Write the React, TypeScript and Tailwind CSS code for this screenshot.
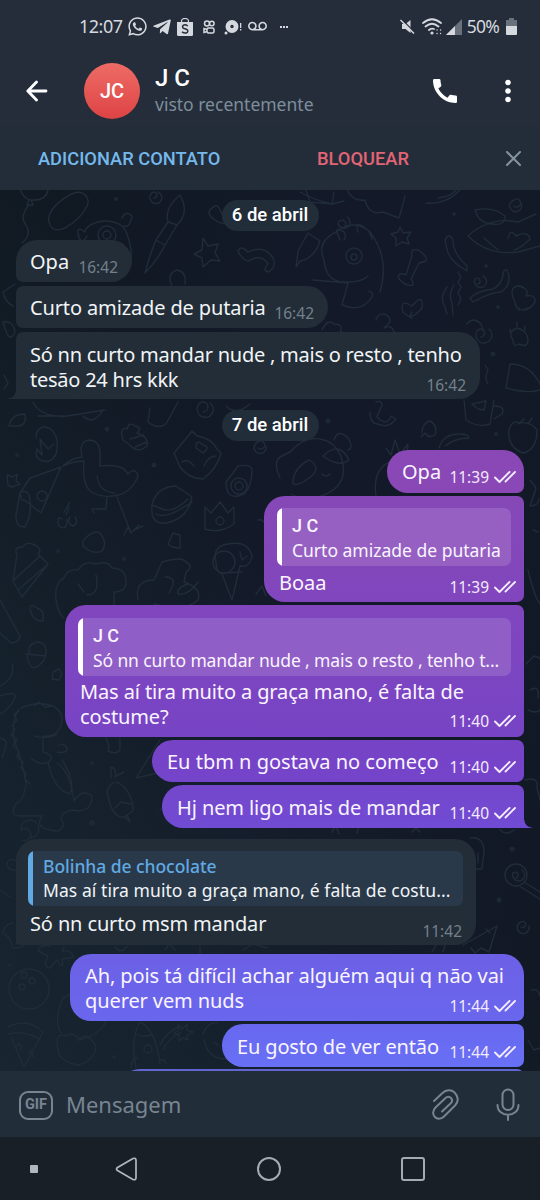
import type { ReactNode } from "react";
import { FaTelegramPlane, FaWhatsapp } from "react-icons/fa";
import { MdCall, MdMoreVert, MdVoicemail } from "react-icons/md";

function Wallpaper() {
  return (
    <svg
      className="absolute inset-0 h-full w-full"
      viewBox="0 190 540 881"
      fill="none"
      stroke="#202c3a"
      strokeWidth="1.4"
      strokeLinecap="round"
      strokeLinejoin="round"
    >
      {/* balloon, sausage and puppy */}
      <path d="M20 190q6 12 14 10q12 0 14-10M29 200l-2 5h6l-2-5M29 205q-10 12-3 20q6 10-4 18M50 225c-6-12 10-26 24-32c10-3 18 6 12 15c-8 14-30 30-36 17z" />
      <path d="M85 232c2-12 36-18 42 2c4 12 6 22 2 32M85 232q-10-8-6 6q4 6 8-2M122 218q4-8 10-2q-2 12-8 10" />
      <circle cx="107" cy="235" r="9" />
      <circle cx="107" cy="235" r="4" />
      {/* brush */}
      <path d="M168 222q-4-14 12-27q10 18-3 30zM168 222l9 3l-12 20l-9-5zM156 240l9 5q-8 16-20 28q4-16 11-33z" />
      <path d="M154 198a3 3 0 1 0-3-4a6 6 0 1 0 7-2M203 238l5 8l10-2l-3 9l5 8l-9-1l-8 7l-1-9l-8-4l8-4zM215 206q-12 6 0 14q10 8 16-4q-2-8-9-2q-4-10-7-8M238 252q2-8 10 0q18-8 26 8q2 8-6 12q-6-2 0-8q-6-10-18-4q-4 4-12-8z" />
      <path d="M172 286q-6-12 5-16q10 2 8 14M308 233l12 8q-6 18-20 20l-4 6l2-16zM341 228a4 4 0 1 0-3-5a6 6 0 1 0 9-6" />
      {/* calf */}
      <path d="M324 260q-8-18 12-28q18-14 34 0q20 26 10 60M340 240q-6-14 0-10q8 2 4 10M358 232q-4-12 6-5q6 4 8 12M324 260q2 24 24 22q14 0 20-6M313 280l35 3l-6 22M342 305q20 8 30-8q2-4-3-6" />
      <circle cx="354" cy="256" r="8" />
      <circle cx="354" cy="257" r="3" />
      <path d="M400 227l3 6l8-1l-4 6l2 6l-7-2l-6 4l0-8l-5-4l7-2zM412 256q-2-8 6-6q10 6 8 11q-6 2-7 2l-8 16q6 8-4 6q-8-4-9-9q2-4 8-1zM403 312q-4-14 9-6q12-14 10 2q-8 10-14 8zM412 312q-4 6 0 6" />
      <path d="M445 240q4-8 8 0q0 14 14 26v5q-18-10-20-22zM458 272l3 5l-3 5l3 5l-3 6l3 6l-3 6M447 287q-8 10-2 20l2 7M454 285q-6 10-2 18l1 12M470 298l3 4q18-10 28-10q12-8 6-22q-4-1-4 6q-4 14-16 14q-10 2-17 8M478 284a3 3 0 1 0-3-5a6 6 0 1 0 8-3M514 300q-6-14 6-14q10 4 6 10q10-2 9 6q-8 12-18 6zM519 308v2M526 308v2" />
      {/* sleeping fish */}
      <path d="M468 236q22-20 50-14l18-8M468 236q20 20 50 16l22-6M475 210q18-4 30 6q0 10-12 8q-14 0-18-14zM508 238q2-10 8-2q12-6 14 3q-10 10-16 11M484 238l14 12" />
      <path d="M347 190q6 12 18 10q4 16 18 12l16 6q4-14 6-22M300 192q14 8 32 12l12-3M426 203q20 2 34-13M438 198q14-2 18-8M514 206a4 4 0 1 0 0-6a6 6 0 1 0 7 3M306 190l4 12l22 2l2-12" />
      <path d="M481 337a4 4 0 1 0-4-6a8 8 0 1 0 12-2M513 340q-6-8 4-12q10 2 11 12q0 8-9 4q-6 4-6-4M510 332v-3M517 326v-4M525 330v-4M506 388l4-24q20 0 30 20M506 388q20 6 34 2M488 384q-4-6 0-14l-3-5M467 324q6-8 14 0l4 10M376 320a7 7 0 1 1 14 2l-6 6q8-4 10 4M322 330q6-12 12-6q10 0 6 8q12 0 10 8" />
      {/* left edge and area below the first messages */}
      <path d="M15 284l-12 8q2 10 10 14M3 322q10-2 12 10q-6 14-12-10M4 375l4 8l-4 6M33 402q8 16 34 14l38-6M38 416h24M83 416q10 10 20-6M150 408l-2 14q10 8 18 2l12-22M203 412a5 5 0 1 0-5-6a8 8 0 1 0 12-3M226 406q10 10 24-2M258 448a4 4 0 1 0 0-6a6 6 0 1 0 8 4" />
      <path d="M9 426q2-12 16-12q2 12-8 12zM36 437c0-14 18-14 21 4c2 16-6 22-14 20q-9-2-6-12l5 6l-2-16l8 10l6-5M123 440q-4-14 4-11q2-8 8-3q8 2 2 7q12 4 10 13q-10 8-17-1zM130 439l14-4M135 447l12-5M7 475l6 2l4-3l-1 7l4 3l-8 3l-4-2z" />
      {/* ibis */}
      <path d="M82 456q-4-14 7-16q10 0 11 12v14q16-2 24 3l4 5q8-8 10 3q-8 16-20 18q-16 4-28-4q-8-8-6-30q-10 0-21 5q8-8 19-9M97 476q2 16 18 17M107 497l-1 12l-14 0l2 4M117 497l14 36M124 535l4-8l3 6l8-8M134 530l9-4" />
      <path d="M20 493l10-15l31-11l-20 46l-9-7q-6-6-10-6zM20 493q6-4 9 2q4 18-4 32q-10 0-9-12zM62 519q-6-4-3 7q8 6 8-7M70 517q-4 6 3 9q6-3 2-9M64 512l6-10M66 515l3-8M83 541q10-12 17-8q8 10 2 18q-10 4-19-5z" />
      <circle cx="42" cy="496" r="5" />
      {/* pillow, burger, fries, avocado */}
      <path d="M174 453l15-18l3-4l5 5q14 2 20 13l4 4q-4 16-18 26q-14 0-23-12zM196 448q0-10 7-3q8 2 0 8zM182 462q6-4 12 4M204 466q4-10 12-10M152 505q4-18 24-19l16 11q-4 22-26 26q-16 2-14-18l10 4q12 4 26-10M156 514q10 6 36-12M205 507l6 6l9-11l8 11l6-6v17q-14 10-29 5zM226 482q8-10 12-16q12-2 14 3q0 18-8 25q-18 8-18-12" />
      <circle cx="220" cy="521" r="4" />
      <circle cx="239" cy="486" r="8" />
      <circle cx="239" cy="486" r="4" />
      <path d="M168 544l5-11l7 2v13q-8 0-12-4M17 555q-4-8 6-8q4-6 12-2q8 4 3 9l10 10l-26 33l-9-16zM14 580l26-24M18 590l28-24M31 612q-4-10 6-4q8 2 6 13q-10 0-12-9z" />
      {/* elephant and chef */}
      <path d="M64 618c-10-8-12-36 0-40q4-10 14-8q6-10 18-6q12-4 16 4q14 0 14 14q0 10-12 10v18M96 575q4 20-9 20M78 584l6 8M138 600q-4-20 16-20l8-18q20-6 24 0q8 4 0 10l-2 10q18 6 14 18q-12 12-44 4M165 577q14 0 4 16M188 584q-12 4-10 10q10 2 20-12M216 562q-4-16 12-18q20-4 24 12q-2 12-12 10l-8 34l-10-26q-6-2-6-12M223 573l19-1M240 552l2 8l5-4" />
      <circle cx="224" cy="562" r="11" />
      {/* cow, anchor, cup, berries */}
      <path d="M280 478q-8-18 2-22q8-4 8-4q16-18 34-12q10 2 17 16q10 30-20 40q-16 6-30-2M334 440q4-12 14-2q6 10 0 12M293 484q0-16 16-24q14 8 0 18q-10 8-16 6M323 456q16-16 26 4q-10 8-26-4M322 474q4 4 8 0" />
      <path d="M376 402q6-2 6 3l-5 12q10 10 14-1l5 3q-8 10-18 5q-8 0-8-12M464 400l2 20q12 8 24 4l4-24M494 406q12 0 8 8l-8 5M472 404l14-3l-2 9l-6-1zM422 433q0-10 8-12q8 4 5 14q-6 4-10-2l-4 4M439 448q4-14 20-14q10 0 10 4q-14 0-24 8M509 429q4-10 10-6q12-2 18 7q0 20-14 23q-16-6-14-24zM518 424l6-5M528 424l4-6M376 496q-4-28 16-35M386 448l5 7l4-15l5 14l8-10l-1 12M530 480l6 8l-6 18q8 0 9-7M258 520q6-2 10 10M533 530l5 2M528 570q6 26 12 34M256 594l6-8l4 10" />
      {/* marker, strawberry, dinosaur */}
      <path d="M0 600l20 36q0 6-9 7l-11-10M30 654q-4-10 8-12q12 2 6 18q-14 18-17-6zM26 654l20 2M12 664q4 14-12 22M53 672l6-3l3 5l-3 6l-7-1zM0 696q16-6 15 2q-6 12-15 16M0 738q8 2 6 8l-4 12" />
      <path d="M21 708q18-8 32-2q12 6 8 20q-6 12-18 10v16q10 2 8 8q-8 8-20-2M19 710q-8 10-5 30q8 18 12 44q-2 16-10 20q-8 12 6 12h20q-8 12 10 14q8 4 12-6q-8-10 8-14q20 4 20-14q-10-8-18 5q-4-30-17-38M34 736q14 4 23-2M58 746q6-4 9 2q0 6-10 4M48 762q6 28 22 32q6-12-8-34M19 710l-5 5l3 5l-5 5l3 5l-4 5l6 5l-4 6l6 5l-2 6l6 5l-2 6l5 5l-1 6l5 5M35 706l4-4l6 5l7-1" />
      <path d="M106 737q4 10 2 14q8 4 12-1V738M136 778l24-38M136 778l26-6M107 792q4-12 12-9q14 10 14 28l-9 6q-12 2-17-25M115 808l6-6l10 2M125 817l5 5l-3-7M111 778v-11q6 2 4 10M116 776l8-4M22 840a6 6 0 1 0-1-10a9 9 0 1 1 10 8M160 810q6-6 4 4" />
      {/* right margin */}
      <path d="M525 780q14-4 12 8l3 12M530 690q10-6 8 8M526 664l8-8l6 2M528 710q8 4 12 0M500 830q6 6 14 0M332 832l4-6l3 8M357 833l2-7M412 832l4-4l4 4" />
      <circle cx="516" cy="875" r="11" />
      <path d="M516 878a3 3 0 1 0-3-5a6 6 0 1 0 9-3M524 882l16 10M521 887l19 12M470 838q14-2 14 14l-2 17h-7l-4-20M478 853v10M521 927a3 3 0 1 0 0-5a6 6 0 1 0 8 4M463 945l34-19l-8 26l-8-4l-6 5l-4-5M432 952l6-10h8l-3 10M486 929l4 4M532 990q6-2 8 6M528 1040l6 10l6-2" />
      {/* bottom left */}
      <circle cx="29" cy="989" r="20" />
      <circle cx="24" cy="975" r="3" />
      <circle cx="32" cy="981" r="3" />
      <circle cx="22" cy="987" r="3" />
      <path d="M15 860q-8-2-8 5q2 6 9 5M0 890l10 7M13 923q-10 2-10 11q6 0 10 14q8 0 12-3M50 946q-10-2-12 5l10 5q-6 12 2 12l7-8q8 12 5-1l12-2q-4-8-12-6l2-4M115 947q6 8 12-1M165 950l4-6l6 6M200 946v8M243 950l10-6l14 4" />
      <path d="M8 1027q20-10 35 5l-19 35l-13-30M8 1034q16-4 32 5M17 1046q4-6 4 4M29 1053q4-6 4 4M61 1033q-8-14 2-35l8-4M66 1036q-12-4-8 13q0 12 20 16q16-4 18-18q-8-16-16-8q-10-8-14-3M78 1040q20-4 28-18q-8-6-14-4M136 1068q-6-30 4-46q16 8 20 42M135 1034q6 4 16 1M160 1045q6-12 18-18M163 1050q4-10 18-18M178 1024l4 5l5-5v6l6 2l-6 4l1 4l-5-2l-4 3v-6l-5-2l5-3zM131 1068q2-14 7-9M166 1063q-4-6-6-2M203 1034q4-12 14-11M204 1040q4 20 24 19M214 1042l4 3" />
      <circle cx="148" cy="1049" r="4" />
      <g fill="#1c2836" stroke="none">
        <circle cx="116" cy="199" r="2" />
        <circle cx="454" cy="214" r="2" />
        <circle cx="486" cy="266" r="2" />
        <circle cx="498" cy="307" r="2" />
        <circle cx="493" cy="354" r="2.5" />
        <circle cx="107" cy="429" r="2.5" />
        <circle cx="17" cy="455" r="2" />
        <circle cx="154" cy="465" r="2.5" />
        <circle cx="58" cy="551" r="2" />
        <circle cx="124" cy="559" r="2" />
        <circle cx="92" cy="763" r="2" />
        <circle cx="92" cy="823" r="3" />
        <circle cx="512" cy="849" r="2.5" />
        <circle cx="499" cy="900" r="2.5" />
        <circle cx="10" cy="965" r="2" />
        <circle cx="114" cy="1057" r="2" />
        <circle cx="328" cy="421" r="2.5" />
        <circle cx="496" cy="434" r="2" />
      </g>
    </svg>
  );
}

function Checks() {
  return (
    <svg className="mb-[4px] ml-[5px] h-3 w-[22px] shrink-0" viewBox="0 0 22 12" fill="none" stroke="#f4ecfd" strokeWidth="1.9" strokeLinecap="round" strokeLinejoin="round">
      <path d="M1 6.5L5.5 11L15.5 1M11.5 10.5L21 1" />
    </svg>
  );
}

type BubbleProps = {
  className: string;
  lines: ReactNode[];
  time: string;
  timeShift?: string;
  out?: boolean;
  quote?: ReactNode;
};

function Bubble({ className, lines, time, timeShift = "translate-y-[3px]", out, quote }: BubbleProps) {
  const last = lines.length - 1;
  return (
    <div
      className={`relative flex shrink-0 flex-col justify-end ${
        out ? "mr-4 self-end pr-2 pl-[15px] text-[#faf5ff]" : "ml-4 self-start pr-[14px] pl-[14px] text-[#f1f4f6]"
      } ${className}`}
    >
      {quote}
      {lines.map((line, i) => (
        <div key={i} className="flex h-[25px] items-end justify-between text-[20px] leading-[25px] whitespace-nowrap">
          <span>{line}</span>
          {i === last && (
            <span className={`flex h-[18px] shrink-0 items-end tracking-normal ${timeShift}`}>
              <span className={`text-[15.5px] leading-[20px] ${out ? "text-[#f4eafd]" : "text-[#74808c]"}`}>{time}</span>
              {out && <Checks />}
            </span>
          )}
        </div>
      ))}
    </div>
  );
}

type QuoteProps = {
  name: string;
  text: string;
  className: string;
  barClass?: string;
  bodyClass?: string;
  nameClass?: string;
};

function Quote({
  name,
  text,
  className,
  barClass = "bg-white",
  bodyClass = "pt-[6px]",
  nameClass = "font-[Roboto] text-[18px]",
}: QuoteProps) {
  return (
    <div className={`flex shrink-0 overflow-hidden rounded-[7px] ${className}`}>
      <div className={`w-[5px] shrink-0 ${barClass}`} />
      <div className={`flex flex-col pl-[10px] whitespace-nowrap ${bodyClass}`}>
        <span className={`leading-[24px] font-medium ${nameClass}`}>{name}</span>
        <span className="text-[17.5px] leading-[24px]">{text}</span>
      </div>
    </div>
  );
}

function DatePill({ children, className }: { children: ReactNode; className: string }) {
  return (
    <div className={`flex h-[31px] w-[97px] shrink-0 items-center justify-center self-center rounded-full bg-[#212d39] font-[Roboto] text-[18.5px] font-medium text-white ${className}`}>
      {children}
    </div>
  );
}

function StatusBar() {
  return (
    <div className="flex h-[53px] items-center pr-[23px] pl-[79px] text-[#d5d9df]">
      <span className="w-[43px] text-[18px] tracking-[-0.5px]">12:07</span>
      <FaWhatsapp className="ml-[5px] size-[21px]" />
      <FaTelegramPlane className="ml-[4px] size-[20px]" />
      <svg className="ml-[5px] h-[18px] w-4" viewBox="0 0 16 18">
        <path d="M0 4h16v12.500a1.500 1.500 0 0 1-1.500 1.500h-13A1.500 1.500 0 0 1 0 16.500z" fill="currentColor" />
        <path d="M4.500 5V3.500a3.500 3 0 0 1 7 0V5" fill="none" stroke="currentColor" strokeWidth="1.200" />
        <path d="M10.800 8Q8 5.800 6 7.500Q4.500 10 8 10.800Q12 12 10.300 14.300Q8 16 5 13.800" fill="none" stroke="#252d3a" strokeWidth="1.500" />
      </svg>
      <svg className="ml-[10px] h-[14px] w-3" viewBox="0 0 12 14" fill="none" stroke="currentColor" strokeWidth="1.500">
        <circle cx="4" cy="3.500" r="2.500" />
        <circle cx="8.800" cy="3.500" r="2.300" />
        <rect x="4" y="8" width="7" height="5" rx="1.500" />
        <path d="M4 9.500L1 8.500v4l3-1" />
      </svg>
      <svg className="ml-[9px] h-4 w-[18px]" viewBox="0 0 18 16" fill="currentColor">
        <path fillRule="evenodd" d="M8 1a6.500 6.500 0 1 1 0 13a6.500 6.500 0 0 1 0-13M8 5.800a1.700 1.700 0 1 0 0 3.400a1.700 1.700 0 0 0 0-3.400" />
        <circle cx="2" cy="14" r="1.500" />
        <path d="M16 4h1.300v5H16zM16 10h1.300v1.500H16z" />
      </svg>
      <MdVoicemail className="ml-[6px] size-[19px]" />
      <span className="ml-[13px] flex gap-[1px]">
        <i className="size-[2px] bg-current" />
        <i className="size-[2px] bg-current" />
        <i className="size-[2px] bg-current" />
      </span>
      <svg className="ml-auto h-[15px] w-[15px]" viewBox="0 0 15 15">
        <path d="M2 5h3.500L10.500 1v13L5.500 10H2z" fill="currentColor" />
        <path d="M1.500 0L15 13.500" stroke="#252d3a" strokeWidth="1.200" />
        <path d="M.5 1L14 14.500" stroke="currentColor" strokeWidth="1.500" />
      </svg>
      <svg className="ml-[7px] h-[17px] w-5" viewBox="0 0 20 17" fill="none" stroke="currentColor" strokeWidth="1.800" strokeLinecap="round">
        <path d="M1 5Q10-2.500 19 5M3.500 8.500Q10 3 16.500 8.500M7 12q2-2 5-1" />
        <circle cx="10" cy="15" r="0.700" fill="currentColor" />
        <path d="M15 12h.1M15 15.500h.1M18.500 12h.1M18.500 15.500h.1" strokeWidth="1.300" />
      </svg>
      <svg className="ml-[4px] h-4 w-4" viewBox="0 0 16 16">
        <path d="M16 0v16H0z" fill="#69717c" />
        <path d="M9 7v9H0z" fill="currentColor" />
      </svg>
      <span className="ml-[5px] text-[17.5px] tracking-[-0.8px]">50%</span>
      <svg className="ml-[7px] h-[17px] w-[11px]" viewBox="0 0 11 17">
        <path d="M3 0h5v2h3v6H0V2h3z" fill="#69717c" />
        <path d="M0 8h11v8q0 1-1 1H1q-1 0-1-1z" fill="currentColor" />
      </svg>
    </div>
  );
}

function Header() {
  return (
    <div className="flex h-[73px] items-center pt-[2px] pl-[26px] text-white">
      <svg className="h-[22px] w-[22px]" viewBox="0 0 22 22" fill="none" stroke="currentColor" strokeWidth="2.800" strokeLinecap="round" strokeLinejoin="round">
        <path d="M20 11H2M10.500 2L1.800 11L10.500 20" />
      </svg>
      <div className="ml-[36px] flex size-14 items-center justify-center rounded-full bg-linear-to-b from-[#ee6b66] to-[#dd4344] font-[Roboto] text-[20px] font-medium">
        JC
      </div>
      <div className="ml-[15px] flex w-[180px] flex-col">
        <span className="font-[Roboto] text-[24px] leading-[27px] font-medium">J C</span>
        <span className="text-[17.5px] leading-[24px] whitespace-nowrap text-[#7e8d9b]">visto recentemente</span>
      </div>
      <MdCall className="ml-auto size-[32px]" />
      <MdMoreVert className="mr-[15px] ml-[30px] size-[34px]" />
    </div>
  );
}

export default function App() {
  return (
    <div className="flex h-[1200px] w-[540px] flex-col overflow-hidden bg-[#181f26] font-['Noto_Sans',sans-serif]">
      <div className="h-[126px] shrink-0 bg-[#252d3a]">
        <StatusBar />
        <Header />
      </div>

      <div className="flex h-16 shrink-0 items-center bg-[#222d39] pt-[1px] font-[Roboto] text-[18.3px] font-medium">
        <span className="ml-[38px] w-[279px] text-[#75b9ec]">ADICIONAR CONTATO</span>
        <span className="text-[#e36475]">BLOQUEAR</span>
        <svg className="mr-[19px] ml-auto size-[15px]" viewBox="0 0 15 15" stroke="#8492a0" strokeWidth="2" strokeLinecap="round">
          <path d="M1 1l13 13M14 1L1 14" />
        </svg>
      </div>

      <div className="relative flex h-[881px] shrink-0 flex-col overflow-hidden bg-[linear-gradient(100deg,#101921_0%,#131929_50%,#121925_100%)]">
        <div className="absolute inset-0 bg-linear-to-tr from-[#182631] via-transparent via-55% to-transparent" />
        <Wallpaper />

        <DatePill className="relative mt-[10px]">6 de abril</DatePill>
        <Bubble className="mt-[9px] h-[42px] w-[116px] rounded-[21px] rounded-bl-[7px] bg-[#222d38] pb-2" lines={["Opa"]} time="16:42" />
        <Bubble className="mt-[4px] h-[42px] w-[312px] rounded-[21px] rounded-l-[7px] bg-[#222d38] pb-2 tracking-[-0.13px]" lines={["Curto amizade de putaria"]} time="16:42" />
        <Bubble
          className="mt-[4px] h-[67px] w-[464px] rounded-[21px] rounded-l-[7px] rounded-bl-none bg-[#222d38] pb-[7px] tracking-[-0.24px] before:absolute before:bottom-0 before:-left-2 before:size-2 before:bg-[radial-gradient(circle_at_0_0,transparent_7px,#222d38_8px)]"
          lines={["Só nn curto mandar nude , mais o resto , tenho", "tesão 24 hrs kkk"]}
          time="16:42"
        />

        <DatePill className="relative mt-[11px]">7 de abril</DatePill>
        <Bubble out className="mt-[9px] h-[43px] w-[137px] rounded-[21px] rounded-br-[7px] bg-[#8948b5] pb-[9px]" lines={["Opa"]} time="11:39" />
        <Bubble
          out
          className="mt-[3px] h-[106px] w-[260px] rounded-[21px] rounded-r-[7px] bg-linear-to-b from-[#8648b6] to-[#8146be] pb-[7px]"
          timeShift="translate-y-[2px]"
          quote={<Quote className="mr-[5px] mb-[4px] -ml-[2px] h-[58px] bg-[#9560c2]" name="J C" text="Curto amizade de putaria" />}
          lines={["Boaa"]}
          time="11:39"
        />
        <Bubble
          out
          className="mt-[3px] h-[132px] w-[459px] rounded-[21px] rounded-r-[7px] bg-linear-to-b from-[#8146be] to-[#7744c5] pb-2 tracking-[-0.12px]"
          timeShift="translate-y-[2px]"
          quote={<Quote className="mr-[5px] mb-[3px] -ml-[2px] h-[58px] bg-[#905ec7]" name="J C" text="Só nn curto mandar nude , mais o resto , tenho t..." />}
          lines={["Mas aí tira muito a graça mano, é falta de", "costume?"]}
          time="11:40"
        />
        <Bubble out className="mt-[3px] h-[42px] w-[372px] rounded-[21px] rounded-r-[7px] bg-linear-to-b from-[#7743c6] to-[#7444ca] pb-2" lines={["Eu tbm n gostava no começo"]} time="11:40" />
        <Bubble
          out
          className="mt-[3px] h-[43px] w-[362px] rounded-[21px] rounded-tr-[7px] rounded-br-none bg-linear-to-b from-[#7447cb] to-[#714bd4] pb-2 tracking-[-0.1px] before:absolute before:-right-2 before:bottom-0 before:size-2 before:bg-[radial-gradient(circle_at_100%_0,transparent_7px,#714bd4_8px)]"
          lines={["Hj nem ligo mais de mandar"]}
          time="11:40"
        />

        <Bubble
          className="mt-[11px] h-[106px] w-[460px] rounded-[21px] rounded-bl-[3px] bg-[#222d38] pb-[9px] tracking-[-0.13px]"
          timeShift="translate-y-[5px]"
          quote={
            <Quote
              className="-mr-[1px] mb-[5px] -ml-[2px] h-[55px] bg-[#29394a] tracking-[0.08px]"
              barClass="bg-[#61a9e3]"
              bodyClass="pt-[3px]"
              nameClass="text-[17.5px] text-[#61a9e3] tracking-[-0.05px]"
              name="Bolinha de chocolate"
              text="Mas aí tira muito a graça mano, é falta de costu..."
            />
          }
          lines={["Só nn curto msm mandar"]}
          time="11:42"
        />

        <Bubble
          out
          className="mt-[9px] h-[67px] w-[454px] rounded-[21px] rounded-br-[7px] bg-linear-to-b from-[#6c60e5] to-[#6967ee] pb-2 tracking-[-0.1px]"
          lines={["Ah, pois tá difícil achar alguém aqui q não vai", "querer vem nuds"]}
          time="11:44"
        />
        <Bubble out className="mt-[3px] h-[43px] w-[302px] rounded-[21px] rounded-r-[7px] bg-linear-to-b from-[#6868ef] to-[#6870f6] pb-2 tracking-[-0.15px]" lines={["Eu gosto de ver então"]} time="11:44" />
        <div className="relative mt-[2px] mr-4 h-[43px] w-[405px] shrink-0 self-end rounded-[21px] rounded-tr-[7px] bg-[#6065d0]" />
      </div>

      <div className="flex h-[66px] shrink-0 items-center bg-[#222d3a] pr-5 pl-[19px] text-[#788591]">
        <span className="mt-[2px] flex h-[29px] w-[34px] items-center justify-center rounded-[9px] border-2 border-current font-[Roboto] text-[14.5px] font-bold">GIF</span>
        <span className="mt-px ml-[13px] text-[22px]">Mensagem</span>
        <svg className="ml-auto h-[31px] w-[27px]" viewBox="0 0 27 31" fill="none" stroke="currentColor" strokeWidth="2" strokeLinecap="round" strokeLinejoin="round">
          <path d="M2 12L10.500 4C14 .8 19 .3 22.500 3.500C27 8 26.500 12.500 23 16.500L12 27.500C9 30.500 5 30.300 2.800 28C.5 25.500.5 21.500 3.500 18.500L13 9.500C15 7.500 17.500 7.500 19 9C20.500 10.500 20.300 12.700 18.500 14.500L10 22.500" />
        </svg>
        <svg className="ml-[37px] h-[33px] w-6" viewBox="0 0 24 33" fill="none" stroke="currentColor" strokeWidth="2" strokeLinecap="round">
          <rect x="6.500" y="1.500" width="11" height="20.500" rx="5.500" />
          <path d="M1.500 17c0 13 21 13 21 0M12 27v5" />
        </svg>
      </div>

      <div className="flex h-[63px] shrink-0 items-center pl-[30px]">
        <span className="size-2 rounded-[1px] bg-[#b2b7bd]" />
        <svg className="ml-[77px] h-6 w-[23px]" viewBox="0 0 23 24" fill="none" stroke="#b2b7bd" strokeWidth="1.700" strokeLinejoin="round">
          <path d="M2.500 10.500L18 1.500Q21 .5 21 3.500V20.500Q21 23.500 18 22.500L2.500 13.500Q.5 12 2.500 10.500z" />
        </svg>
        <span className="ml-[119px] size-6 rounded-full border-2 border-[#a5abb1]" />
        <span className="ml-[120px] size-6 rounded-[3px] border-2 border-[#a5abb1]" />
      </div>
    </div>
  );
}
